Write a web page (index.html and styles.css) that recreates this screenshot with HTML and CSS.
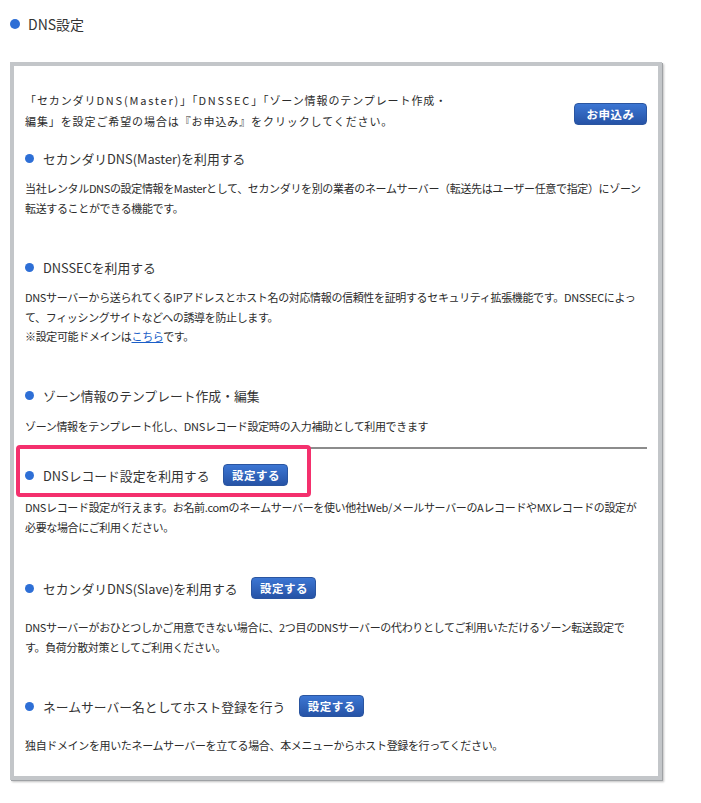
FILE: index.html
```html
<!DOCTYPE html>
<html lang="ja">
<head>
	<meta charset="UTF-8">
	<title>DNS設定</title>
	<link rel="stylesheet" href="styles.css">
</head>
<body>
	<div class="page">
		<h2 class="title"><span class="dot"></span>DNS設定</h2>

		<div class="box">
			<div class="intro">
				<p class="intro-text">「セカンダリ<span class="wide">DNS(Master)</span>」「<span class="wide">DNSSEC</span>」「ゾーン情報のテンプレート作成・<br>編集」を設定ご希望の場合は『お申込み』をクリックしてください。</p>
				<a class="btn btn-apply" href="#">お申込み</a>
			</div>

			<div class="sec sec-first">
				<h3 class="sec-head"><span class="dot"></span>セカンダリDNS(Master)を利用する</h3>
				<p class="desc">当社レンタルDNSの設定情報をMasterとして、セカンダリを別の業者のネームサーバー（転送先はユーザー任意で指定）にゾーン<br>転送することができる機能です。</p>
			</div>

			<div class="sec">
				<h3 class="sec-head"><span class="dot"></span>DNSSECを利用する</h3>
				<p class="desc">DNSサーバーから送られてくるIPアドレスとホスト名の対応情報の信頼性を証明するセキュリティ拡張機能です。DNSSECによっ<br>て、フィッシングサイトなどへの誘導を防止します。<br>※設定可能ドメインは<a href="#">こちら</a>です。</p>
			</div>

			<div class="sec">
				<h3 class="sec-head"><span class="dot"></span>ゾーン情報のテンプレート作成・編集</h3>
				<p class="desc">ゾーン情報をテンプレート化し、DNSレコード設定時の入力補助として利用できます</p>
			</div>

			<hr class="line">

			<div class="sec sec-mark">
				<div class="mark"></div>
				<h3 class="sec-head"><span class="dot"></span>DNSレコード設定を利用する<a class="btn" href="#">設定する</a></h3>
				<p class="desc">DNSレコード設定が行えます。お名前.comのネームサーバーを使い他社Web/メールサーバーのAレコードやMXレコードの設定が<br>必要な場合にご利用ください。</p>
			</div>

			<div class="sec sec-wide">
				<h3 class="sec-head"><span class="dot"></span>セカンダリDNS(Slave)を利用する<a class="btn" href="#">設定する</a></h3>
				<p class="desc">DNSサーバーがおひとつしかご用意できない場合に、2つ目のDNSサーバーの代わりとしてご利用いただけるゾーン転送設定で<br>す。負荷分散対策としてご利用ください。</p>
			</div>

			<div class="sec sec-wide">
				<h3 class="sec-head"><span class="dot"></span>ネームサーバー名としてホスト登録を行う<a class="btn" href="#">設定する</a></h3>
				<p class="desc">独自ドメインを用いたネームサーバーを立てる場合、本メニューからホスト登録を行ってください。</p>
			</div>
		</div>
	</div>
</body>
</html>
```

FILE: styles.css
```css
*{
	margin: 0;
	padding: 0;
	box-sizing: border-box;
}
body{
	background: #fff;
	color: #2b2b2b;
	font-family: "Noto Sans CJK JP", "Noto Sans", sans-serif;
}
.page{
	padding: 14px 10px 20px 10px;
	width: 701px;
}
.title{
	display: flex;
	align-items: center;
	height: 20px;
	font-size: 14px;
	font-weight: normal;
	color: #333;
}
.title .dot{
	width: 10px;
	height: 10px;
	margin-right: 8px;
}
.dot{
	display: inline-block;
	flex: none;
	width: 9px;
	height: 9px;
	border-radius: 50%;
	background: #2e6fd6;
	margin-right: 9px;
}

/* grey frame */
.box{
	margin-top: 28px;
	width: 652px;
	border: 4px solid #c3c6c9;
	box-shadow: 1px 1px 0 #9fa2a5, 2px 2px 2px rgba(0,0,0,0.25);
	background: #fff;
	padding: 24px 11px 20px 11px;
	font-size: 11px;
}
.intro{
	display: flex;
	justify-content: space-between;
	align-items: center;
}
.intro-text{
	line-height: 21px;
	letter-spacing: 0.9px;
	white-space: nowrap;
}
.intro-text .wide{
	letter-spacing: 1.8px;
}
.btn{
	display: inline-block;
	height: 22px;
	padding: 0 12px;
	border-radius: 4px;
	background: linear-gradient(#3c76d3, #2653a6);
	border: 1px solid #2a55a0;
	line-height: 20px;
	color: #fff;
	font-size: 11.5px;
	font-weight: bold;
	text-decoration: none;
	letter-spacing: 0.5px;
}
.btn-apply{
	width: 73px;
	text-align: center;
	padding: 0;
	margin-top: 5px;
}

.sec{
	margin-top: 38px;
	position: relative;
}
.sec-first{
	margin-top: 15px;
}
.sec-head{
	display: flex;
	align-items: center;
	height: 22px;
	font-size: 12.8px;
	font-weight: normal;
	color: #333;
	white-space: nowrap;
}
.sec-head .btn{
	margin-left: 14px;
	width: 65px;
	padding: 0;
	text-align: center;
}
.desc{
	margin-top: 10px;
	line-height: 19.5px;
	white-space: nowrap;
	letter-spacing: -0.35px;
}
.desc a{
	color: #1b5fc8;
}
.sec-wide{
	margin-top: 40px;
}
.sec-wide + .sec-wide{
	margin-top: 38px;
}
.sec-wide .desc{
	margin-top: 19px;
}
.line{
	border: none;
	height: 2px;
	background: #8c8c8c;
	margin-top: 11px;
}
.sec-mark{
	margin-top: 15px;
}
.sec-mark .desc{
	margin-top: 12px;
}
/* pink highlight drawn over the row */
.mark{
	position: absolute;
	left: -9px;
	top: -19px;
	width: 295px;
	height: 52px;
	border: 4px solid #f4306d;
	border-radius: 4px;
}
```
